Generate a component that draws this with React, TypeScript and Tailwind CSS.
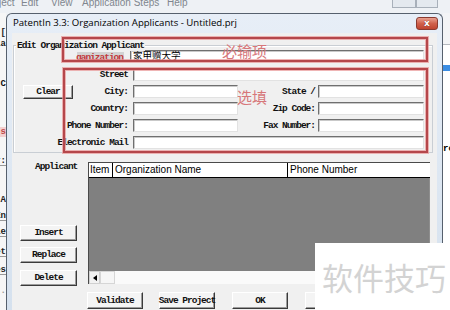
import React from "react";

const LBL = "font-['Liberation_Mono',monospace] text-[9.5px] font-bold tracking-[-1px] text-[#111] leading-none whitespace-nowrap";

function Btn({ children, className = "" }: { children?: React.ReactNode; className?: string }) {
  return (
    <div
      className={`flex items-center justify-center shrink-0 bg-[#f4f4f4] border border-t-white border-l-white border-r-[#3a3a3a] border-b-[#3a3a3a] shadow-[inset_-1px_-1px_0_#9c9c9c] ${LBL} ${className}`}
    >
      {children}
    </div>
  );
}

function Input({ className = "", children }: { className?: string; children?: React.ReactNode }) {
  return (
    <div
      className={`h-full shrink-0 bg-white border border-t-[#6f6f6f] border-l-[#6f6f6f] border-r-[#e2e2e2] border-b-[#e2e2e2] shadow-[inset_1px_1px_0_#c9c9c9] flex items-center ${className}`}
    >
      {children}
    </div>
  );
}

function Row({
  label,
  right,
  full,
  left,
  first,
}: {
  label: string;
  right?: string;
  full?: boolean;
  left?: React.ReactNode;
  first?: boolean;
}) {
  return (
    <div className={`flex items-center h-[13px] ${first ? "mt-[6px]" : "mt-[4px]"}`}>
      <div className="w-[50px] ml-[9px] shrink-0 flex items-center">{left}</div>
      <div className={`w-[55px] shrink-0 flex justify-end ${LBL}`}>{label}</div>
      {full ? (
        <Input className="w-[291px] ml-[5px]" />
      ) : (
        <>
          <Input className="w-[105px] ml-[5px]" />
          <div className={`w-[77px] shrink-0 flex justify-end ${LBL}`}>{right}</div>
          <Input className="w-[106px] ml-[3px]" />
        </>
      )}
    </div>
  );
}

const leftBits: { h: number; t?: string; c?: string }[] = [
  { h: 14 },
  { h: 12, t: "[", c: "text-[#222]" },
  { h: 1 },
  { h: 9, t: "ia", c: "text-[#222]" },
  { h: 30 },
  { h: 10, t: "C", c: "text-[#111]" },
  { h: 38 },
  { h: 10, t: "s", c: "text-[#c04a4a] bg-[#f3d0d0]" },
  { h: 20 },
  { h: 9, t: "r:", c: "text-[#222] border-b border-[#999]" },
  { h: 30 },
  { h: 8, t: "A", c: "text-[#222]" },
  { h: 8 },
  { h: 9, t: "En", c: "text-[#222] border-b border-[#999]" },
  { h: 7 },
  { h: 9, t: "le", c: "text-[#222] border-b border-[#999]" },
  { h: 11 },
  { h: 9, t: "et", c: "text-[#222] border-b border-[#999]" },
  { h: 9 },
  { h: 9, t: "es", c: "text-[#222] border-b border-[#999]" },
  { h: 12 },
  { h: 9, t: "..", c: "text-[#999]" },
];

export default function App() {
  return (
    <div className="relative w-[450px] h-[310px] overflow-hidden bg-[#eef1f5] flex flex-col">
      {/* background app menubar */}
      <div className="h-[13px] shrink-0 flex items-start font-['Liberation_Sans',sans-serif] text-[10px] text-[#80868e] leading-none overflow-hidden">
        <div className="w-[22px] -mt-[2px] -ml-[1px]">ject</div>
        <div className="w-[30px] -mt-[2px]">Edit</div>
        <div className="w-[31px] -mt-[2px]">View</div>
        <div className="w-[85px] -mt-[2px]">Application Steps</div>
        <div className="w-[225px] -mt-[2px]">Help</div>
        <div className="w-[24px] h-[9px] border border-[#a8b0ba] border-t-0 bg-[#e4e9ef] -mt-[1px]" />
        <div className="w-[22px] h-[9px] border border-[#a8b0ba] border-t-0 bg-[#e4e9ef] -mt-[1px]" />
      </div>

      <div className="flex flex-1 min-h-0">
        {/* left strip of background app */}
        <div className="w-[6px] shrink-0 bg-[#f6f6f6] flex flex-col overflow-hidden">
          {leftBits.map((b, i) => (
            <div
              key={i}
              style={{ height: b.h }}
              className={`shrink-0 flex justify-end items-center whitespace-nowrap font-['Liberation_Mono',monospace] text-[9px] font-bold leading-none ${b.c ?? ""}`}
            >
              {b.t}
            </div>
          ))}
        </div>

        {/* dialog */}
        <div className="w-[437px] shrink-0 border border-b-0 border-[#56606d] rounded-t-[6px] bg-gradient-to-b from-[#e7eef7] to-[#d5e1ee] flex flex-col px-[5px]">
          <div className="h-[19px] shrink-0 flex items-start">
            <div className="flex-1 pl-[1px] pt-[3px] font-['Open_Sans',sans-serif] text-[9.6px] leading-[12px] text-black whitespace-nowrap">
              PatentIn 3.3: Organization Applicants - Untitled.prj
            </div>
            <div className="mt-[3px] -mr-[1px] w-[22px] h-[13px] rounded-[3px] border border-[#8a3a30] bg-gradient-to-b from-[#e9a08f] via-[#d0614c] to-[#c0442f] flex items-center justify-center">
              <span className="font-['DejaVu_Sans',sans-serif] text-[9px] font-bold leading-none text-white [text-shadow:0_0_1px_#5a1a10]">
                x
              </span>
            </div>
          </div>

          {/* client */}
          <div className="flex-1 bg-[#f0f0f0] flex flex-col">
            {/* group box */}
            <div className="relative ml-[1px] mt-[12px] w-[420px] h-[108px] shrink-0 border border-[#c9ced4] shadow-[inset_1px_1px_0_#fff] flex flex-col">
              <div className={`absolute -top-[5px] left-[2px] px-[1px] bg-[#f0f0f0] ${LBL}`}>
                Edit Organization Applicant
              </div>
              <div className="flex items-end h-[12px] mt-[4px]">
                <div className={`ml-[63px] w-[47px] h-[10px] bg-[#d2d2d2] flex items-end justify-end pr-[1px] ${LBL} text-[#c2393b] underline decoration-[#d06060]`}>
                  ganization
                </div>
                <Input className="w-[294px] ml-[6px]">
                  <span className="pl-[2px] font-['Noto_Sans_CJK_SC',sans-serif] text-[9.5px] leading-none text-black">
                    家甲赠大学
                  </span>
                </Input>
              </div>
              <Row label="Street" full first />
              <Row label="City:" right="State /" left={<Btn className="w-[50px] h-[14px]">Clear</Btn>} />
              <Row label="Country:" right="Zip Code:" />
              <Row label="Phone Number:" right="Fax Number:" />
              <Row label="Electronic Mail" full />
            </div>

            {/* lower section */}
            <div className="flex mt-[9px] shrink-0">
              <div className="w-[76px] shrink-0 flex flex-col">
                <div className={`ml-[23px] h-[10px] flex items-center ${LBL}`}>Applicant</div>
                <Btn className="ml-[8px] mt-[53px] w-[57px] h-[16px]">Insert</Btn>
                <Btn className="ml-[8px] mt-[6px] w-[57px] h-[16px]">Replace</Btn>
                <Btn className="ml-[8px] mt-[7px] w-[57px] h-[16px]">Delete</Btn>
              </div>
              <div className="w-[342px] h-[122px] shrink-0 flex flex-col border-t border-l border-[#4a4a4a]">
                <div className="h-[15px] shrink-0 bg-white flex border-b border-black font-['Liberation_Sans',sans-serif] text-[10px] leading-[14px] text-black">
                  <div className="w-[24px] shrink-0 border-r border-black pl-[1px]">Item</div>
                  <div className="w-[175px] shrink-0 border-r border-black pl-[2px]">Organization Name</div>
                  <div className="flex-1 pl-[2px]">Phone Number</div>
                </div>
                <div className="flex-1 bg-[#808080] flex justify-end">
                  <div className="w-[1px] bg-[#8e8e8e]" />
                </div>
                <div className="h-[13px] shrink-0 bg-[#fafafa] flex">
                  <div className="w-[11px] h-full border border-[#d0d0d0] bg-[#f2f2f2] flex items-center justify-center">
                    <div className="w-0 h-0 border-y-[3px] border-y-transparent border-r-[4px] border-r-black" />
                  </div>
                  <div className="w-[15px] h-full border border-[#d6d6d6] bg-[#f6f6f6]" />
                </div>
              </div>
            </div>

            {/* bottom buttons */}
            <div className="flex mt-[6px] ml-[75px] shrink-0">
              <Btn className="w-[56px] h-[17px]">Validate</Btn>
              <Btn className="ml-[16px] w-[56px] h-[17px]">Save Project</Btn>
              <Btn className="ml-[17px] w-[56px] h-[17px]">OK</Btn>
              <Btn className="ml-[17px] w-[56px] h-[17px]" />
            </div>
          </div>
        </div>

        {/* right strip of background app */}
        <div className="w-[7px] shrink-0 bg-[#f3f4f6] flex flex-col">
          <div className="h-[31px] shrink-0" />
          <div className="h-[1px] shrink-0 bg-[#b5b9bf]" />
          <div className="h-[20px] shrink-0 bg-white" />
          <div className="h-[6px] shrink-0 bg-[#3b8de3]" />
          <div className="h-[74px] shrink-0 bg-white" />
          <div className="h-[10px] shrink-0 bg-white font-['Liberation_Mono',monospace] text-[9px] font-bold leading-none text-black whitespace-nowrap">
            ro
          </div>
          <div className="flex-1 bg-white" />
        </div>
      </div>

      {/* annotations */}
      <div className="absolute left-[62px] top-[37px] w-[366px] h-[25px] border-2 border-[#b5474b] shadow-[0_0_0_1px_rgba(232,150,150,0.7),inset_0_0_0_1px_rgba(232,150,150,0.7)]" />
      <div className="absolute left-[63px] top-[68px] w-[365px] h-[85px] border-2 border-[#b5474b] shadow-[0_0_0_1px_rgba(232,150,150,0.7),inset_0_0_0_1px_rgba(232,150,150,0.7)]" />
      <div className="absolute left-[222px] top-[43px] font-['Noto_Sans_CJK_SC',sans-serif] text-[15px] leading-none text-[#d7777a]">
        必输项
      </div>
      <div className="absolute left-[237px] top-[89px] font-['Noto_Sans_CJK_SC',sans-serif] text-[15px] leading-none text-[#d7777a]">
        选填
      </div>

      {/* watermark */}
      <div className="absolute right-0 bottom-0 w-[135px] h-[67px] bg-white flex items-center justify-center pl-[3px]">
        <span className="font-['Noto_Sans_CJK_SC',sans-serif] text-[31px] leading-none text-[#d3d3d3]">
          软件技巧
        </span>
      </div>
    </div>
  );
}
